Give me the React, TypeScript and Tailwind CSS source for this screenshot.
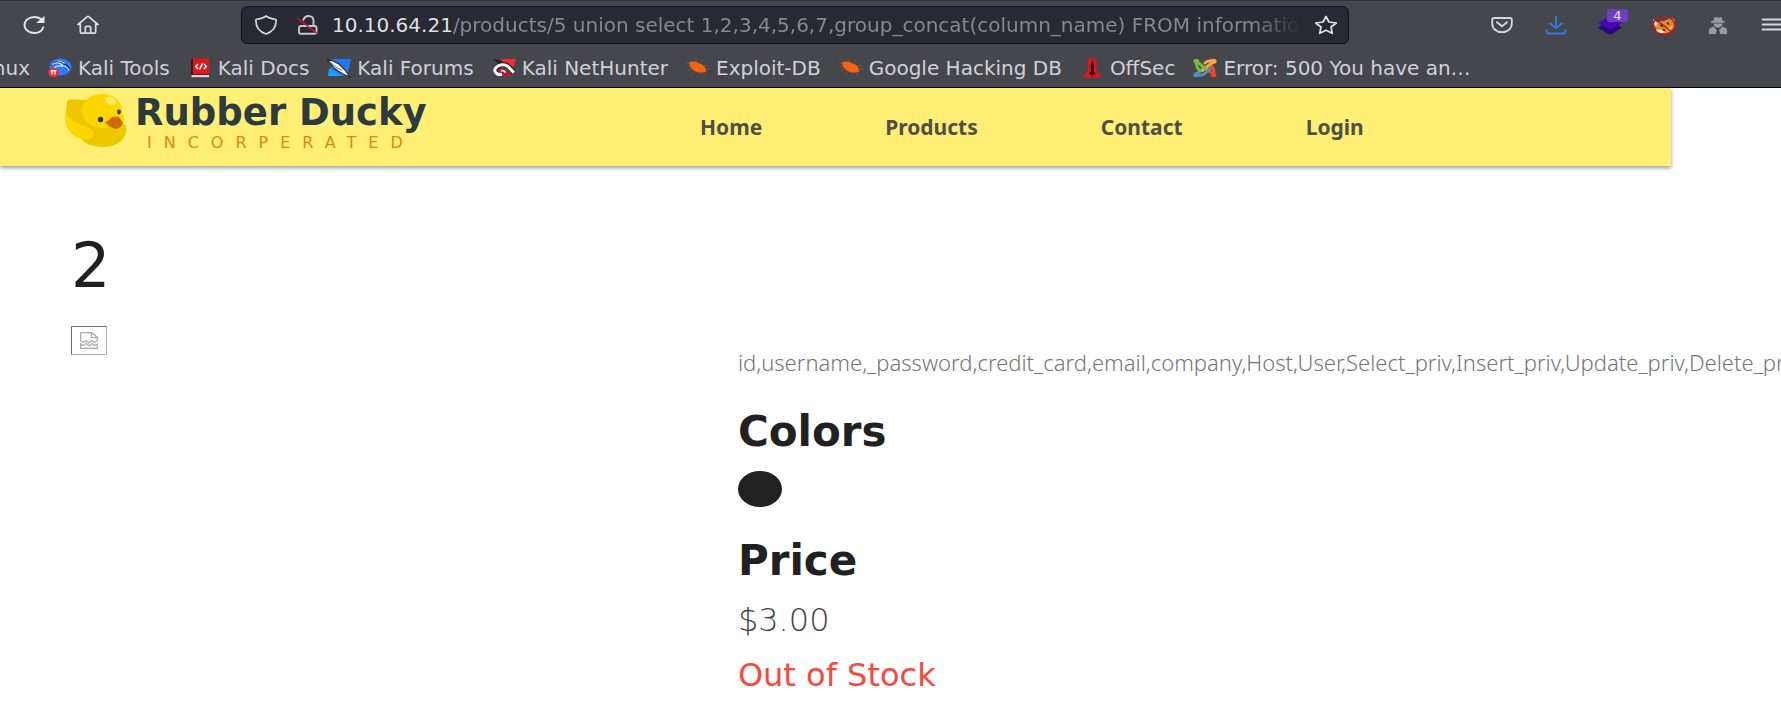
import React from "react";
import type { ReactNode } from "react";

type IconProps = { className: string; box?: string; children: ReactNode };

function Icon({ className, box = "0 0 24 20", children }: IconProps) {
  return (
    <svg className={className} viewBox={box} fill="none" aria-hidden="true" preserveAspectRatio="none">
      {children}
    </svg>
  );
}

const ToolsIcon = () => (
  <Icon className="h-5 w-6">
    <ellipse cx="12.5" cy="9" rx="11" ry="8.5" fill="#2b7bff" />
    <path d="M3 7.5C8 3 13 3.500 16 6c2.500 .5 4.500 2.500 5.500 5.500" stroke="#10397f" strokeWidth="1.600" />
    <path d="M4 6.500C9 4 13 5 15 8c3 0 5 1.500 6 4.500M6 10c3-2.500 6-2.500 9-1.500M10 3c3 0 5 1 6.500 2.500" stroke="#cfe2ff" strokeWidth="1.100" />
    <ellipse cx="5.500" cy="14.500" rx="5.500" ry="4.800" fill="#ee2b34" />
    <path d="M2.500 12.700h6M4 12.700v3.800M7 12.700v3.800" stroke="#fff" strokeWidth="1.300" />
  </Icon>
);

const DocsIcon = () => (
  <Icon className="h-5 w-6">
    <path d="M3 1h2.500v15H3z" fill="#4a1015" />
    <path d="M5 .5h16v15.500H5z" fill="#dd1a1a" />
    <path d="M3.500 17H21v2.200H3.500z" fill="#d8dade" />
    <path d="M3 16h18v1H3z" fill="#7c1016" />
    <path d="M10 6 7.800 8.500 10 11M16 6l2.200 2.500L16 11M14.500 5.500 11.500 11.500" stroke="#fff" strokeWidth="1.500" />
  </Icon>
);

const ForumsIcon = () => (
  <Icon className="h-5 w-6">
    <path d="M5 1h19l-4 17H1L4 9z" fill="#2377fb" />
    <path d="M2 10 1 18h14z" fill="#1fa0ff" />
    <path d="M0 1c2 2 4 1 6 2l6 3 3 3 3 3 5 7-7-3-5-3-4-3-3-4z" fill="#f4f4f0" stroke="#24262c" strokeWidth="1.100" />
    <path d="M4 5l6 5 5 2" stroke="#6c6f76" strokeWidth="1" />
  </Icon>
);

const HunterIcon = () => (
  <Icon className="h-5 w-6">
    <path d="M7 1h17l-3.500 11-7-5z" fill="#f9282d" />
    <path d="M4 9 1 18h19l-4-4-6-4z" fill="#c01530" />
    <path d="M0 .5c4 1 8 .5 11 3L8 6C5 5 3 3 0 .5z" fill="#24262c" />
    <path d="M5 17C1 10.500 7 6 12.500 6.500c4 .5 6.500 4 9.500 8" stroke="#24262c" strokeWidth="5" />
    <path d="M10 16.500C3 17 1.500 12.500 4 9.500 7 6 13 6 16 8.500c2 2 3.500 4 6 6" stroke="#fff" strokeWidth="3" />
    <path d="M9 13c2-1 3.500 0 4.500 1.500" stroke="#fff" strokeWidth="1.500" />
  </Icon>
);

const BugIcon = () => (
  <Icon className="h-5 w-6">
    <path d="M0 5h6M3 8l-2.500 .5M5 11l-3 2M8 13l-1 3M10 4V1.500M14 5l2-2.500M18 8l4-.5M20 11h3.500M17 15l3 1.500M6 4 4 2" stroke="#9c4a22" strokeWidth="1" />
    <path d="M3 5c3-2 7-2 10 .5 4 .5 6.500 3.500 7.500 8-4 1.500-9.500 1.500-12.500-1C5 11 3.500 8 3 5z" fill="#f26414" />
  </Icon>
);

const OffSecIcon = () => (
  <Icon className="h-5 w-6">
    <path d="M8 .5h8.500v12L22 19.500H2l6-7z" fill="#e01616" />
    <path d="M12.300 2l1.700 5-.5 6 2.500 3-2.500 .5-1.200 2-1.200-2-2.500-.5 2.500-3-.5-6z" fill="#3a0608" />
  </Icon>
);

const JoomlaIcon = () => (
  <Icon className="h-5 w-6">
    <g strokeWidth="3" strokeLinecap="round" strokeLinejoin="round">
      <path d="M20.500 16.500 11 9M20 16c1.500-3.500 .5-6.500-2-8.500" stroke="#f44321" />
      <path d="M4 16.500c4 1.500 6.500 .5 8.500-1.500l5-4.500M3.500 16 10 10.500" stroke="#4f91cd" />
      <path d="M20.500 3.500c-3.500-1.500-6.500-.5-8.500 1.500M20 4 9.500 12.500" stroke="#f9a541" />
      <path d="M3.500 3.500 13 11M4 4C2.500 8 4 10.500 7.500 13" stroke="#78b943" />
    </g>
    <ellipse cx="3.300" cy="3.300" rx="2.900" ry="2.500" fill="#78b943" />
    <ellipse cx="20.700" cy="3.300" rx="2.900" ry="2.500" fill="#f9a541" />
    <ellipse cx="20.700" cy="16.700" rx="2.900" ry="2.500" fill="#f44321" />
    <ellipse cx="3.300" cy="16.700" rx="2.900" ry="2.500" fill="#4f91cd" />
  </Icon>
);

const bookmarks: { label: string; icon: ReactNode }[] = [
  { label: "Kali Tools", icon: <ToolsIcon /> },
  { label: "Kali Docs", icon: <DocsIcon /> },
  { label: "Kali Forums", icon: <ForumsIcon /> },
  { label: "Kali NetHunter", icon: <HunterIcon /> },
  { label: "Exploit-DB", icon: <BugIcon /> },
  { label: "Google Hacking DB", icon: <BugIcon /> },
  { label: "OffSec", icon: <OffSecIcon /> },
  { label: "Error: 500 You have an…", icon: <JoomlaIcon /> },
];

function ToolButton({ label, children }: { label: string; children: ReactNode }) {
  return (
    <button type="button" aria-label={label} className="flex h-12 w-[54px] shrink-0 items-center justify-center">
      {children}
    </button>
  );
}

function BrowserBar() {
  return (
    <div className="overflow-hidden border-b border-black bg-[#45474d] text-[#d0d2d6]">
      <div className="flex h-12 items-center border-t border-[#303238] pl-[7px]">
        <ToolButton label="Reload">
          <Icon className="h-5 w-6">
            <path d="M21.500 11.500C20.500 15.500 17 18 12.500 18 7 18 2.500 14.500 2.500 10S7 2 12.500 2c3 0 5.500 1 7.500 3" stroke="#e2e2e4" strokeWidth="1.900" />
            <path d="M22.500 1v7H14z" fill="#e8e8ea" />
          </Icon>
        </ToolButton>
        <ToolButton label="Home">
          <Icon className="h-5 w-6">
            <path d="M1.500 10 11 1.800q1-.8 2 0L22.500 10M4.300 8v8.500q0 1.700 2 1.700h11.400q2 0 2-1.700V8M9.300 18v-5q0-1.700 1.700-1.700h2q1.700 0 1.700 1.700v5" stroke="#dcdce0" strokeWidth="1.700" strokeLinejoin="round" />
          </Icon>
        </ToolButton>
        <form className="mx-[126px] flex h-[38px] min-w-0 flex-1 items-center rounded-md border border-[#111218] bg-[#272935] pr-2.5 pl-3" onSubmit={(e) => e.preventDefault()}>
          <Icon className="mr-[18px] h-5 w-6 shrink-0">
            <path d="M12 1C9 3.300 6 4 2 4.500 1.500 11 5 16.500 12 19c7-2.500 10.500-8 10-14.500C18 4 15 3.300 12 1z" stroke="#d8d8dc" strokeWidth="1.700" strokeLinejoin="round" />
          </Icon>
          <Icon className="mr-3 h-5 w-6 shrink-0">
            <path d="M4.500 11h14q2 0 2 2v4q0 1.800-2 1.800H5q-2 0-2-1.800v-4q0-2 2-2M7 5.500C8 2.500 10 1 12.500 1 15.500 1 17.500 3 17.500 5.500V11" stroke="#c6c7cc" strokeWidth="1.900" />
            <path d="M1 3l21 16" stroke="#e0143c" strokeWidth="1.500" />
          </Icon>
          <label htmlFor="address" className="text-[20px] leading-8 text-[#dfdfe3]">10.10.64.21</label>
          <input
            id="address"
            type="text"
            defaultValue="/products/5 union select 1,2,3,4,5,6,7,group_concat(column_name) FROM information_schema.columns"
            className="mr-3 h-8 min-w-0 flex-1 bg-transparent mask-r-from-[calc(100%-50px)] mask-r-to-100% text-[20px] text-[#86888f] outline-none"
          />
          <button type="button" aria-label="Bookmark this page" className="shrink-0">
            <Icon className="h-5 w-6">
              <path d="M12 1.500l3 5.500 7.300 1-5.300 4 1.300 6.300L12 15.300l-6.300 3L7 12 1.700 8 9 7z" stroke="#e2e2e6" strokeWidth="1.700" strokeLinejoin="round" />
            </Icon>
          </button>
        </form>
        <div className="-mr-[18px] flex shrink-0">
          <ToolButton label="Save to Pocket">
            <Icon className="h-5 w-6">
              <path d="M4 3h16q1.800 0 1.800 1.700V8.500c0 5-4.300 8.700-9.800 8.700S2.200 13.500 2.200 8.500V4.700Q2.200 3 4 3z" stroke="#d8d8dc" strokeWidth="1.800" />
              <path d="M7 7.300l5 4 5-4" stroke="#d8d8dc" strokeWidth="1.900" strokeLinecap="round" />
            </Icon>
          </ToolButton>
          <ToolButton label="Downloads">
            <Icon className="h-5 w-6">
              <path d="M12 1v11.500M5.500 8l6.500 5 6.500-5M2.500 14v2q0 2.500 2.500 2.500h14q2.500 0 2.500-2.500v-2" stroke="#2e7cf0" strokeWidth="1.800" strokeLinejoin="round" />
            </Icon>
          </ToolButton>
          <ToolButton label="Proxy profiles, 4 active">
            <span className="relative">
              <Icon className="h-5 w-6">
                <path d="M0 12.500 12 6l12 6.500L12 20z" fill="#25067e" />
                <path d="M0 8 12 1l12 7-12 7z" fill="#4a06b0" />
              </Icon>
              <span className="absolute -top-[6px] left-[9px] flex h-[13px] w-[21px] items-center justify-center rounded-[2px] bg-[#6b3fc4] text-[13px] leading-none text-[#eee8fa]">4</span>
            </span>
          </ToolButton>
          <ToolButton label="FoxyProxy disabled">
            <Icon className="h-5 w-6">
              <path d="M3 10c2-3 6-4.500 9-4l7-3 3 1 .5 5c0 5-4 9-10 9.500C7 19 3 15.500 3 10z" fill="#e8891c" />
              <path d="M1.500 4 5.500 8 4 12 1.500 9zM19 3l3 5 .5-3zM4 15l5-.5 4 3-6 1zM15 14l5-3-2 5z" fill="#f4efe8" />
              <path d="M8 10l3 1.500M15 7.500l2 2M11 14.500l2 1" stroke="#3a2010" strokeWidth="1.600" />
              <ellipse cx="12" cy="10.500" rx="11" ry="9" stroke="#c3131b" strokeWidth="1.400" />
              <path d="M4 4.500l16 12.500" stroke="#c3131b" strokeWidth="1.400" />
            </Icon>
          </ToolButton>
          <ToolButton label="Private session">
            <Icon className="h-5 w-6">
              <path d="M8.500 2q3.500 1 7 0l1 3.500 2.500 1v1.200H5V6.500l2.500-1zM7.500 8.500h9c0 2.500-2 4.300-4.500 4.300s-4.500-1.800-4.500-4.300z" fill="#9a9ba0" />
              <path d="M3.500 13.500 7.500 11.500l3.300 3.500-1 4H3q-.5-3 .5-5.500zM20.500 13.500 16.500 11.500 13.200 15l1 4H21q.5-3-.5-5.500z" fill="#9a9ba0" />
            </Icon>
          </ToolButton>
          <ToolButton label="Menu">
            <Icon className="h-5 w-6">
              <path d="M2.500 4.500h19M2.500 9.500h19M2.500 14.500h19" stroke="#d8d8dc" strokeWidth="1.800" strokeLinecap="round" />
            </Icon>
          </ToolButton>
        </div>
      </div>
      <nav aria-label="Bookmarks" className="flex h-[39px] items-center gap-[18px] text-[20px] leading-8 whitespace-nowrap">
        <a href="#linux" className="flex w-[30px] shrink-0 justify-end">nux</a>
        {bookmarks.map((b) => (
          <a key={b.label} href="#bookmark" className="flex shrink-0 items-center gap-1.5">
            {b.icon}
            {b.label}
          </a>
        ))}
      </nav>
    </div>
  );
}

function Logo() {
  return (
    <a href="#home" className="flex items-center gap-2">
      <svg className="h-[54px] w-[62px] shrink-0" viewBox="0 0 62 54" fill="none" aria-hidden="true">
        <path d="M2 7Q3 5 8 5.500L22 6l16 22 18 2q5-1 5 3c2 9-6 20-22 20C28 53 20 50 16 45L2 33Q-1 26 1 18z" fill="#ecc800" />
        <path d="M1 20c6 8 14 11 23 14 6 3 6 10 0 11-9 2-19-4-23-14z" fill="#ffd600" />
        <path d="M17 16C18 5 27 0 37 0c12 0 20 7 20 16 0 4 2 5 2 9 0 6-8 9-17 9C28 34 16 28 17 16z" fill="#ffd600" />
        <ellipse cx="46" cy="7" rx="6" ry="3.500" fill="#ffe96a" transform="rotate(22 46 7)" />
        <path d="M40 28q4-1 7-5 4-1 7 0l4 6q-2 5-7 6-6-1-11-7z" fill="#cf6a04" />
        <circle cx="35.500" cy="25.500" r="2.700" fill="#2b3536" />
        <ellipse cx="54" cy="18" rx="1.800" ry="2.400" fill="#2b3536" />
      </svg>
      <span className="flex flex-col">
        <span className="text-[37px] leading-[44px] font-bold text-[#2d3a3f]">Rubber Ducky</span>
        <span className="pl-3 text-[16px] leading-4 tracking-[12px] text-[#dd8618]">INCORPERATED</span>
      </span>
    </a>
  );
}

function SiteHeader() {
  return (
    <header className="mr-[110px] flex h-[78px] items-center bg-[#fff075] pl-[65px] shadow-[0_2px_4px_rgba(0,0,0,0.4)]">
      <div className="w-[635px] shrink-0 pb-3">
        <Logo />
      </div>
      <nav aria-label="Main" className="flex gap-[123px] font-['Noto_Sans',sans-serif] text-[21px] leading-8 font-bold text-[#4f4f45]">
        <a href="#home">Home</a>
        <a href="#products">Products</a>
        <a href="#contact">Contact</a>
        <a href="#login">Login</a>
      </nav>
    </header>
  );
}

export default function App() {
  return (
    <div className="min-h-screen overflow-x-hidden bg-white font-['DejaVu_Sans',sans-serif] text-[#212121]">
      <BrowserBar />
      <SiteHeader />
      <main className="pt-[60px] pl-[71px]">
        <h1 className="text-[62px] leading-[80px]">2</h1>
        <div className="flex">
          <div className="w-[39%] shrink-0 pt-5">
            <div role="img" aria-label="Product picture" className="flex h-[29px] w-9 items-center justify-center border border-t-[#6f6f6f] border-r-[#b0b0b0] border-b-[#b0b0b0] border-l-[#6f6f6f]">
              <Icon className="h-[17px] w-[18px]" box="0 0 18 17">
                <path d="M.7 9V.7h11l5.600 4.500V9l-3 1.500-2.500-2-3 2.500-3-2.500-2.500 2zM11.500 .7v4.800h5.800M.7 16.300v-4.500l2.500 2 3-2.300 2.800 2.300 3-2.300 2.500 2 2.800-1.500v4.300z" stroke="#a9a9a9" strokeWidth="1.200" />
              </Icon>
            </div>
          </div>
          <section className="min-w-0 flex-1 overflow-x-hidden pt-10">
            <p className="font-['Noto_Sans',sans-serif] text-[22px] leading-8 font-light whitespace-nowrap text-[#757575]">
              id,username,_password,credit_card,email,company,Host,User,Select_priv,Insert_priv,Update_priv,Delete_priv
            </p>
            <h2 className="mt-[26px] text-[42px] leading-[56px] font-bold">Colors</h2>
            <div role="img" aria-label="Black" className="mt-[11px] h-9 w-11 rounded-[50%] bg-[#212121]" />
            <h2 className="mt-[26px] text-[42px] leading-[56px] font-bold">Price</h2>
            <p className="mt-[7px] text-[32px] leading-[48px] font-light text-[#424242]">$3.00</p>
            <p className="mt-[7px] text-[32px] leading-[48px] text-[#f9473c]">Out of Stock</p>
          </section>
        </div>
      </main>
    </div>
  );
}
